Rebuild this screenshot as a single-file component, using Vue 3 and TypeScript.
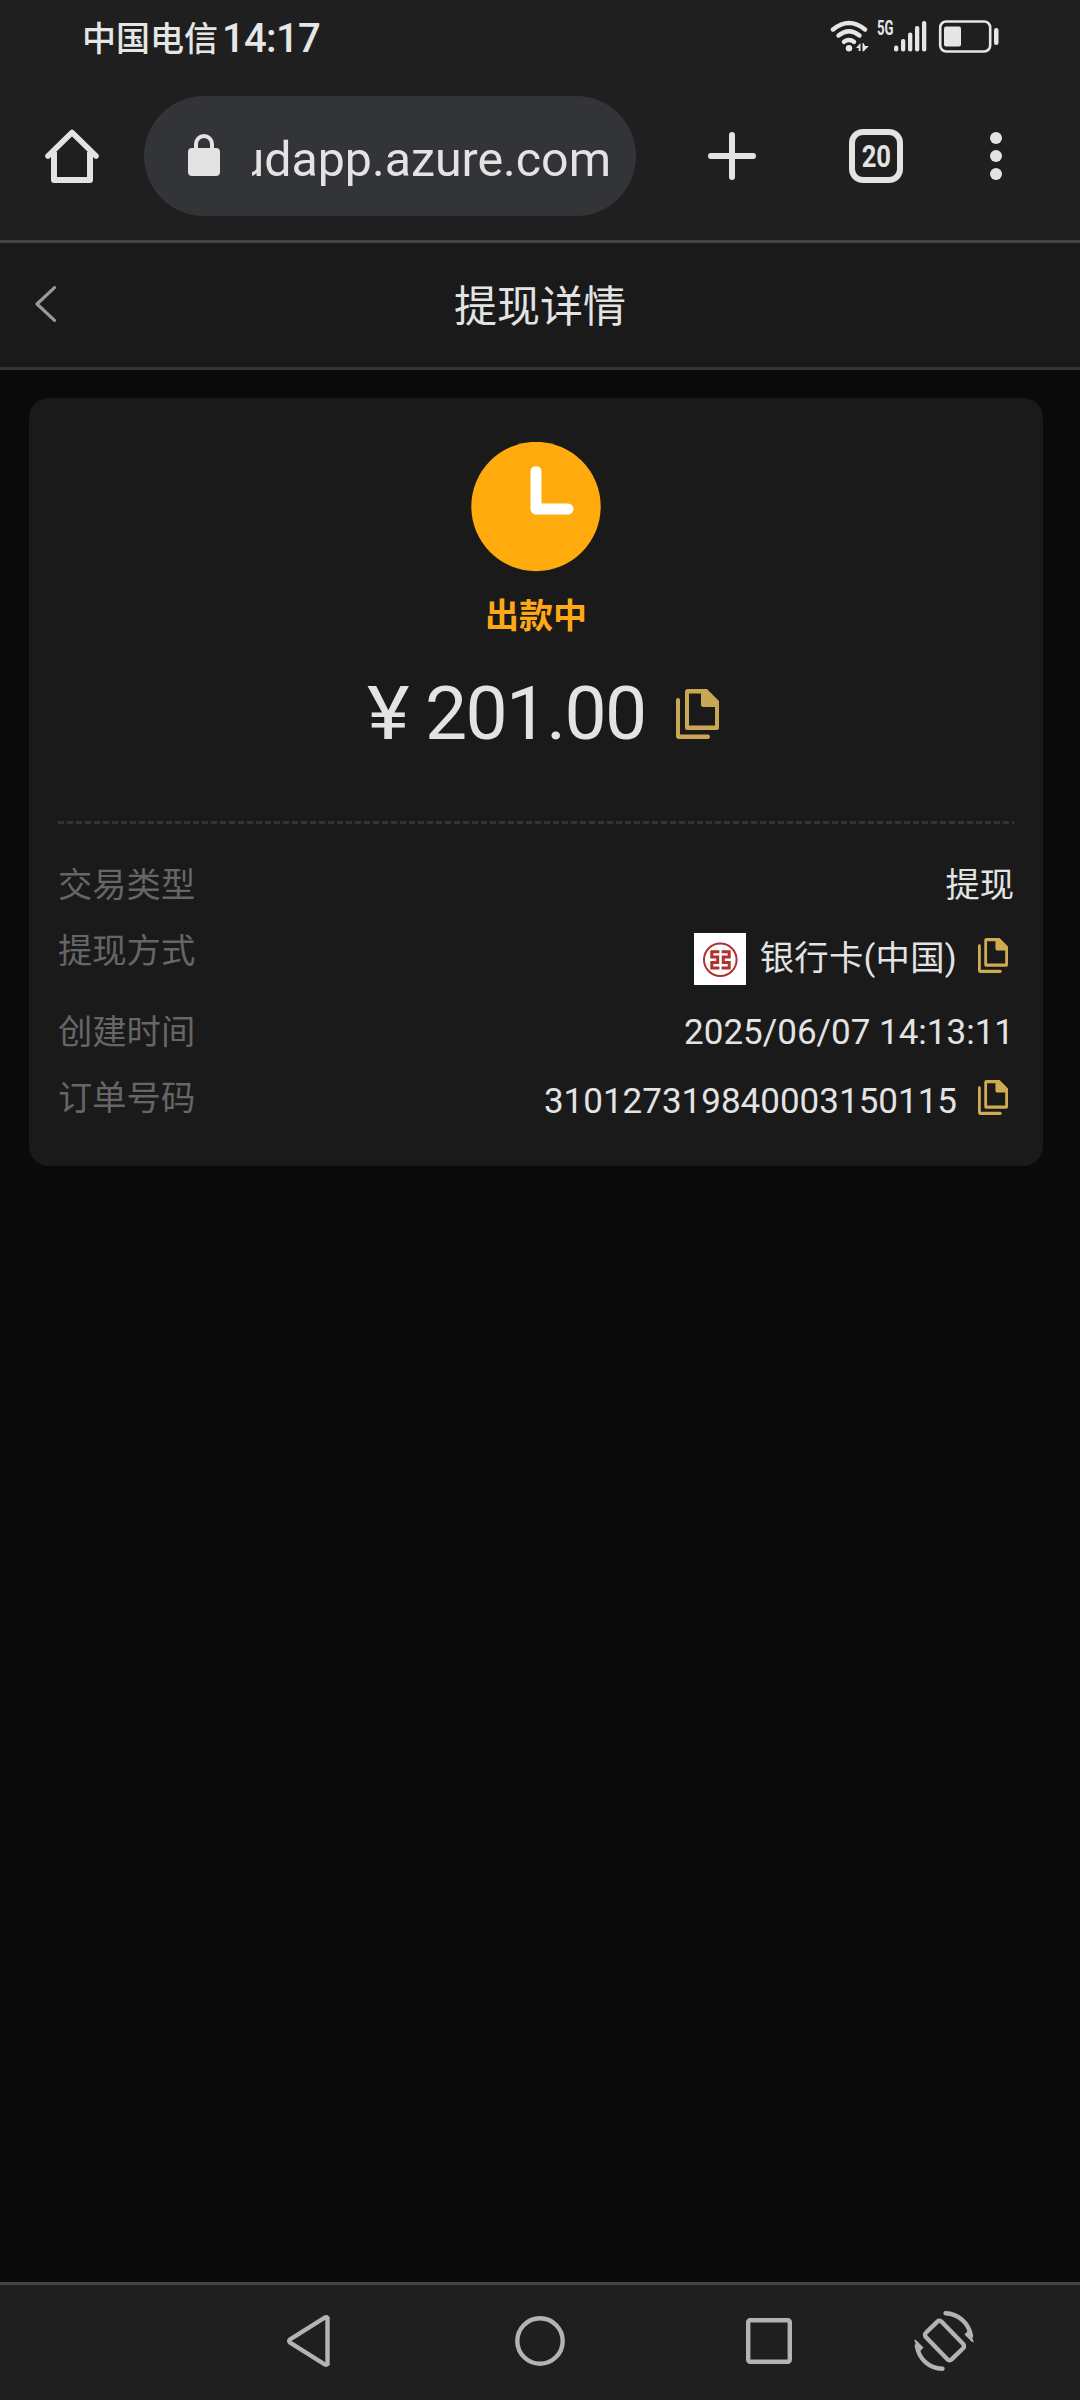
<script setup lang="ts">
interface Detail {
  label: string
  value: string
  kind: 'text' | 'bank' | 'time' | 'order'
  copy: boolean
}

const details: Detail[] = [
  { label: '交易类型', value: '提现', kind: 'text', copy: false },
  { label: '提现方式', value: '银行卡(中国)', kind: 'bank', copy: true },
  { label: '创建时间', value: '2025/06/07 14:13:11', kind: 'time', copy: false },
  { label: '订单号码', value: '310127319840003150115', kind: 'order', copy: true },
]
</script>

<template>
  <div class="screen">
    <header class="status">
      <span class="carrier">中国电信</span>
      <span class="clock">14:17</span>
      <svg class="indicators" width="170" height="40" viewBox="830 16 170 40">
        <g fill="none" stroke="#e6e6e6" stroke-width="4.4" stroke-linecap="round">
          <path d="M833 29.5Q849 16.500 865 29.500" />
          <path d="M838.500 35.500Q849 27 859.500 35.500" />
          <path d="M844 41.800Q849 38 854 41.800" />
        </g>
        <g fill="#e6e6e6">
          <circle cx="849" cy="48.200" r="3.200" />
          <path d="M860.500 43v8h-1.800v-3h-2.700zM862.500 43l1 0 1.500 3h3.800l-5 5.200h-1.300z" />
          <rect x="894" y="45.500" width="4.300" height="6" rx="2" />
          <rect x="901" y="39" width="4.300" height="12.500" rx="2" />
          <rect x="908" y="32.500" width="4.300" height="19" rx="2" />
          <rect x="915" y="26" width="4.300" height="25.500" rx="2" />
          <rect x="922" y="21" width="4.300" height="30.500" rx="2" />
          <rect x="944" y="26.500" width="17" height="20" rx="2" />
          <rect x="994" y="28" width="4.500" height="17" rx="2.200" />
          <text
            x="877" y="34.500" font-family="Roboto, sans-serif" font-weight="700"
            font-size="20" textLength="16.500" lengthAdjust="spacingAndGlyphs"
          >5G</text>
        </g>
        <rect x="940.200" y="21.500" width="50" height="30" rx="6" fill="none" stroke="#e6e6e6" stroke-width="2.600" />
      </svg>
    </header>

    <div class="toolbar">
      <svg class="home" width="54" height="54" viewBox="0 0 54 54" fill="none" stroke="#e3e3e3" stroke-width="6" stroke-linejoin="round" stroke-linecap="round">
        <path d="M3 27L27 3.500L51 27" stroke-width="5.600" />
        <path d="M9 23V51H45V23" stroke-linecap="butt" />
      </svg>
      <div class="address">
        <svg class="lock" width="32" height="42" viewBox="0 0 32 42">
          <rect y="14" width="32" height="28" rx="4" fill="#e3e3e3" />
          <path d="M8 16V10a8 8 0 0 1 16 0V16" fill="none" stroke="#e3e3e3" stroke-width="4" />
        </svg>
        <div class="url"><span>udapp.azure.com</span></div>
      </div>
      <svg class="plus" width="48" height="48" viewBox="0 0 48 48" stroke="#e3e3e3" stroke-width="6" stroke-linecap="round">
        <path d="M3 24H45M24 3V45" />
      </svg>
      <div class="tabs"><span>20</span></div>
      <svg class="more" width="12" height="48" viewBox="0 0 12 48" fill="#e3e3e3">
        <circle cx="6" cy="6" r="6" />
        <circle cx="6" cy="24" r="6" />
        <circle cx="6" cy="42" r="6" />
      </svg>
    </div>

    <div class="titlebar">
      <svg class="back" width="22" height="36" viewBox="0 0 22 36" fill="none" stroke="#999" stroke-width="3.200" stroke-linecap="round" stroke-linejoin="round">
        <path d="M19.500 1.600L2 18L19.500 34.400" />
      </svg>
      <h1>提现详情</h1>
    </div>

    <main>
      <section class="card">
        <svg class="state-icon" width="130" height="130" viewBox="0 0 130 130">
          <circle cx="65" cy="64.500" r="64.700" fill="#ffaa0d" />
          <path d="M65 29.500V67H97" fill="none" stroke="#fff" stroke-width="11" stroke-linecap="round" stroke-linejoin="round" />
        </svg>
        <div class="state">出款中</div>
        <div class="amount">
          <span class="yen">¥</span>
          <span class="sum">201.00</span>
          <svg width="43" height="50" viewBox="0 0 43 50" fill="#c9a855">
            <path fill-rule="evenodd" d="M12 0H31L43 12V38.500Q43 41 40.500 41H11.500Q9 41 9 38.500V3Q9 0 12 0ZM13 4.500V36.500H39V18H27.500Q25 18 25 15.500V4.500Z" />
            <path d="M0 11Q0 9 2 9T4 11V45.500H32Q34 45.500 34 47.700T32 50H3Q0 50 0 47Z" />
          </svg>
        </div>
        <div class="divider"></div>
        <div v-for="row in details" :key="row.label" class="row" :class="row.kind">
          <span class="label">{{ row.label }}</span>
          <svg v-if="row.kind === 'bank'" class="bank-logo" width="52" height="52" viewBox="0 0 52 52">
            <rect width="52" height="52" fill="#fff" />
            <g fill="none" stroke="#b0302f">
              <circle cx="26.300" cy="26.700" r="16.300" stroke-width="2" />
              <path
                d="M25.400 18.700H17.800V23.900H23.700V29.400H17.800V35H25.400M27.600 18.700H35.200V23.900H29.300V29.400H35.200V35H27.600"
                stroke-width="3"
              />
            </g>
          </svg>
          <span class="value">{{ row.value }}</span>
          <svg v-if="row.copy" class="copy" width="30" height="35" viewBox="0 0 43 50" fill="#d0ab52">
            <path fill-rule="evenodd" d="M12 0H31L43 12V38.500Q43 41 40.500 41H11.500Q9 41 9 38.500V3Q9 0 12 0ZM13 4.500V36.500H39V18H27.500Q25 18 25 15.500V4.500Z" />
            <path d="M0 11Q0 9 2 9T4 11V45.500H32Q34 45.500 34 47.700T32 50H3Q0 50 0 47Z" />
          </svg>
        </div>
      </section>
    </main>

    <nav>
      <svg class="nav-back" width="44" height="52" viewBox="0 0 44 52">
        <path d="M41.500 3V49Q40.500 50 39 49.500L4 27.500Q2.500 26 4 24.500L39 2.500Q40.500 2 41.500 3Z" />
      </svg>
      <svg class="nav-home" width="50" height="50" viewBox="0 0 50 50">
        <circle cx="25" cy="25" r="22.700" />
      </svg>
      <svg class="nav-recent" width="46" height="46" viewBox="0 0 46 46">
        <rect x="2.200" y="2.200" width="41.600" height="41.600" rx="2" />
      </svg>
      <svg class="nav-rotate" width="60" height="60" viewBox="0 0 60 60">
        <rect x="12" y="18.500" width="37" height="22" rx="3" transform="rotate(46 30.500 29.500)" />
        <path d="M31.500 2.200C44 2.500 55 12 57 25" stroke-linecap="round" />
        <path d="M28.500 57.800C15 57.500 5 48 2.800 35" stroke-linecap="round" />
        <path d="M50.500 23.500L55 18.500 60 31.500 57.500 30.500ZM9.500 36.500L5 41.500 0 28.500 2.500 29.500Z" class="tip" />
      </svg>
    </nav>
  </div>
</template>

<style>
body {
  background: #0a0a0a;
}
</style>

<style scoped>
.screen {
  width: 1080px;
  height: 2400px;
  display: flex;
  flex-direction: column;
  background: #0a0a0a;
  color: #e3e3e3;
  font-family: Roboto, "Noto Sans CJK SC", sans-serif;
  overflow: hidden;
}
svg {
  display: block;
  flex: none;
}
.status {
  height: 76px;
  box-sizing: border-box;
  padding: 0 80px 4px 82px;
  display: flex;
  align-items: center;
  background: #1f1f1f;
  color: #e6e6e6;
}
.carrier {
  font-size: 34px;
  font-weight: 500;
  line-height: 72px;
  padding-top: 5px;
}
.clock {
  margin: 4px 0 0 4px;
  font-size: 40px;
  font-weight: 500;
  letter-spacing: -0.700px;
}
.indicators {
  margin-left: auto;
}
.toolbar {
  height: 167px;
  box-sizing: border-box;
  border-bottom: 3px solid #444;
  padding: 20px 78px 24px 45px;
  display: flex;
  align-items: center;
  background: #1f1f1f;
}
.address {
  width: 492px;
  height: 120px;
  box-sizing: border-box;
  margin-left: 45px;
  padding: 0 25px 0 44px;
  border-radius: 60px;
  background: #333438;
  display: flex;
  align-items: center;
}
.lock {
  margin-bottom: 2px;
}
.url {
  flex: 1;
  min-width: 0;
  margin-left: 32px;
  display: flex;
  justify-content: flex-end;
  overflow: hidden;
  font-size: 48.300px;
  line-height: 60px;
  padding-top: 8px;
}
.plus {
  margin-left: 72px;
}
.tabs {
  width: 54px;
  height: 54px;
  box-sizing: border-box;
  margin-left: 93px;
  border: 6px solid #e3e3e3;
  border-radius: 14px;
  display: flex;
  align-items: center;
  justify-content: center;
}
.tabs span {
  font-size: 32px;
  font-weight: 700;
  line-height: 42px;
  transform: scaleX(0.800);
}
.more {
  margin-left: 87px;
}
.titlebar {
  height: 127px;
  box-sizing: border-box;
  border-bottom: 3px solid #333;
  background: #1a1a1a;
  padding: 0 35px;
  display: flex;
  align-items: center;
}
.back {
  margin-bottom: 3px;
}
h1 {
  flex: 1;
  margin: 4px 22px 0 0;
  text-align: center;
  font-size: 43px;
  font-weight: 400;
  line-height: 120px;
}
main {
  flex: 1;
  padding: 28px 37px 0 29px;
}
.card {
  height: 768px;
  box-sizing: border-box;
  padding: 44px 29px 0;
  border-radius: 20px;
  background: #1a1a1a;
}
.state-icon {
  margin: 0 auto;
}
.state {
  margin-top: 21px;
  height: 46px;
  text-align: center;
  color: #ffa816;
  font-size: 34px;
  font-weight: 700;
  line-height: 46px;
}
.amount {
  margin: 25px 0 0 309px;
  height: 100px;
  display: flex;
  align-items: center;
  font-size: 75px;
  line-height: 98px;
}
.yen,
.sum {
  padding-bottom: 2px;
}
.yen {
  width: 58px;
  transform: scaleX(1.080);
  transform-origin: left;
}
.sum {
  width: 251px;
  letter-spacing: -1.700px;
}
.divider {
  height: 3px;
  margin: 57px 0 33px;
  background: repeating-linear-gradient(90deg, #333 0 6px, transparent 6px 9px);
}
.row {
  height: 54px;
  margin-bottom: 12px;
  display: flex;
  align-items: center;
  font-size: 34.300px;
  line-height: 54px;
}
.label {
  margin-right: auto;
  padding-top: 2px;
  color: #666;
}
.text .value {
  padding-top: 2px;
}
.bank {
  height: 69px;
  align-items: flex-start;
}
.bank .label {
  padding-top: 1px;
}
.bank-logo {
  margin: 10px 14px 0 0;
}
.bank .value {
  margin-top: 8px;
  letter-spacing: 0.300px;
}
.copy {
  margin: 0 6px 0 21px;
}
.bank .copy {
  margin-top: 15px;
}
.time .value {
  font-size: 35px;
  margin: 3px 0 0;
}
.order .value {
  font-size: 35px;
  margin-top: 9px;
}
nav {
  height: 118px;
  box-sizing: border-box;
  border-top: 3px solid #444;
  padding: 0 106px 3px 286px;
  display: flex;
  align-items: center;
  background: #1f1f1f;
}
nav svg {
  fill: none;
  stroke: #b3b3b3;
  stroke-width: 4.400px;
}
nav .tip {
  fill: #b3b3b3;
  stroke: none;
}
.nav-home {
  margin-left: 185px;
}
.nav-recent {
  margin-left: 181px;
}
.nav-rotate {
  margin-left: auto;
}
</style>
